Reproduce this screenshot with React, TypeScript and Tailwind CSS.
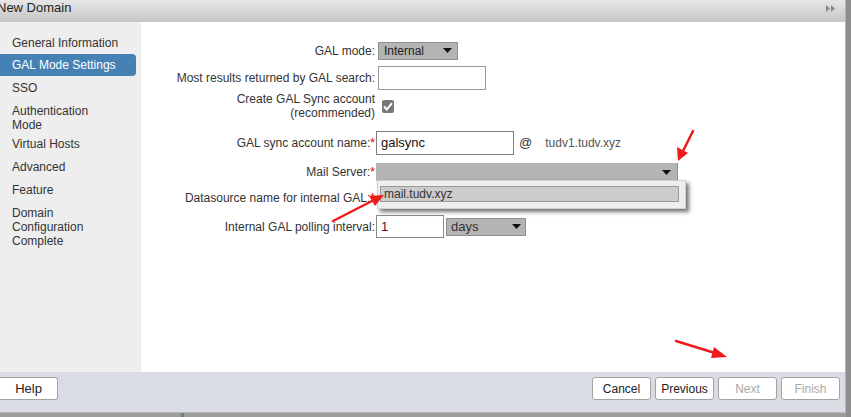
import React from "react";

const navItems: { label: string[]; active?: boolean }[] = [
  { label: ["General Information"] },
  { label: ["GAL Mode Settings"], active: true },
  { label: ["SSO"] },
  { label: ["Authentication", "Mode"] },
  { label: ["Virtual Hosts"] },
  { label: ["Advanced"] },
  { label: ["Feature"] },
  { label: ["Domain", "Configuration", "Complete"] },
];

const Caret = () => (
  <svg width="9" height="5" viewBox="0 0 9 5" className="shrink-0">
    <path d="M0 0 L9 0 L4.5 5 Z" fill="#111" />
  </svg>
);

const Row = ({
  label,
  req,
  className,
  children,
}: {
  label: React.ReactNode;
  req?: boolean;
  className: string;
  children?: React.ReactNode;
}) => {
  return (
    <div className={`flex flex-row items-center ${className}`}>
      <div className="w-[234px] shrink-0 text-right leading-[14px] text-[#333]">
        {label}
        {req && <span className="text-[#d00]">*</span>}
      </div>
      <div className="flex flex-row items-center">{children}</div>
    </div>
  );
};

const Btn = ({ text, off }: { text: string; off?: boolean }) => (
  <div
    className={`w-[59px] h-[23px] flex items-center justify-center rounded-[3px] border border-[#a3a3a3] bg-white text-[12px] ${
      off ? "text-[#a8a8a8]" : "text-[#222]"
    }`}
  >
    {text}
  </div>
);

export default function App() {
  return (
    <div className="relative w-[851px] h-[417px] overflow-hidden bg-[#8e8e8e] text-[12px] font-['Liberation_Sans',Arial,sans-serif]">
      <div className="flex flex-col w-[846px] h-[412px] bg-white border-r border-[#b5b5b5]">
        {/* header */}
        <div className="h-[22px] shrink-0 flex flex-row items-start justify-between bg-gradient-to-b from-[#e6e6e6] to-[#c6c6c6]">
          <span className="ml-[-3px] mt-[0px] text-[13px] leading-[16px] text-[#222]">
            New Domain
          </span>
          <svg width="9" height="7" viewBox="0 0 9 7" className="mt-[5px] mr-[10px]">
            <path d="M0 0 L4 3.5 L0 7 Z M5 0 L9 3.5 L5 7 Z" fill="#8a8a8a" />
          </svg>
        </div>

        {/* body */}
        <div className="flex flex-row flex-1">
          <div className="w-[141px] shrink-0 bg-[#eeeeee] pt-[9px]">
            {navItems.map((it) => {
              const multi = it.label.length > 1;
              const box = multi
                ? "pt-[5px]"
                : it.active
                  ? "h-[22px] flex items-center"
                  : "h-[23px] flex items-center";
              return (
                <div
                  key={it.label[0]}
                  className={`w-[136px] pl-[12px] leading-[14px] ${box} ${
                    it.active ? "bg-[#4681b5] text-white rounded-r-[4px]" : "text-[#333]"
                  }`}
                >
                  {it.label.map((l) => (
                    <div key={l}>{l}</div>
                  ))}
                </div>
              );
            })}
          </div>

          <div className="relative flex-1 flex flex-col pt-[19px]">
            <Row label="GAL mode:" className="h-[19px]">
              <div className="ml-[3px] w-[80px] h-[18px] flex items-center justify-between px-[5px] bg-[#b4b4b4] border border-[#8f8f8f] text-[#222]">
                Internal
                <Caret />
              </div>
            </Row>
            <Row label="Most results returned by GAL search:" className="mt-[6px] h-[24px]">
              <div className="ml-[3px] w-[108px] h-[24px] bg-white border border-[#9a9a9a]" />
            </Row>
            <Row
              label={
                <>
                  Create GAL Sync account
                  <br />
                  (recommended)
                </>
              }
              className="mt-[2px] h-[28px]"
            >
              <div className="ml-[7px] w-[12px] h-[13px] rounded-[2px] bg-[#797979] flex items-center justify-center">
                <svg width="10" height="9" viewBox="0 0 10 9">
                  <path d="M1 4.5 L3.8 7.5 L9 1.2" fill="none" stroke="#fff" strokeWidth="2" />
                </svg>
              </div>
            </Row>
            <Row label="GAL sync account name:" req className="mt-[11px] h-[24px]">
              <div className="ml-[1px] w-[138px] h-[24px] flex items-center pl-[4px] bg-white border border-[#7d7d7d] text-[#111] text-[13px]">
                galsync
              </div>
              <span className="ml-[5px] text-[#333] text-[13px]">@</span>
              <span className="ml-[13px] text-[#555]">tudv1.tudv.xyz</span>
            </Row>
            <Row label="Mail Server:" req className="mt-[8px] h-[18px]">
              <div className="ml-[1px] w-[302px] h-[18px] flex items-center justify-end pr-[6px] bg-[#b4b4b4] border-r border-[#8f8f8f]">
                <Caret />
              </div>
            </Row>
            <Row label="Datasource name for internal GAL:" req className="mt-[8px] h-[18px]" />
            <Row label="Internal GAL polling interval:" className="mt-[8px] h-[23px]">
              <div className="ml-[1px] w-[68px] h-[23px] flex items-center pl-[4px] bg-white border border-[#8a8a8a] text-[#4a1428] text-[13px]">
                1
              </div>
              <div className="ml-[2px] w-[80px] h-[18px] flex items-center justify-between px-[4px] bg-[#b4b4b4] border border-[#8f8f8f] text-[#333] text-[13px]">
                days
                <Caret />
              </div>
            </Row>

            {/* dropdown popup */}
            <div className="absolute left-[236px] top-[158px] w-[309px] h-[29px] bg-[#eeeeee] border border-[#d0d0d0] shadow-[3px_3px_4px_rgba(0,0,0,0.55)] pt-[5px] pl-[2px]">
              <div className="w-[299px] h-[16px] flex items-center pl-[3px] bg-[#cccccc] border border-[#999] text-[#333]">
                mail.tudv.xyz
              </div>
            </div>
          </div>
        </div>

        {/* footer */}
        <div className="h-[40px] shrink-0 flex flex-row items-start justify-between bg-[#d9dde3] pt-[5px] pr-[5px]">
          <div className="w-[58px] h-[23px] flex items-center justify-center rounded-r-[3px] border border-l-0 border-[#a3a3a3] bg-white text-[13px] text-[#222]">
            Help
          </div>
          <div className="flex flex-row gap-[4px]">
            <Btn text="Cancel" />
            <Btn text="Previous" />
            <Btn text="Next" off />
            <Btn text="Finish" off />
          </div>
        </div>
      </div>

      {/* bottom strip */}
      <div className="h-[5px] w-[846px] bg-[#9c9c9c] border-t border-[#b8b8b8] flex flex-row">
        <div className="ml-[181px] w-[3px] bg-[#6f7c82]" />
      </div>

      {/* red annotation arrows */}
      <svg className="absolute left-0 top-0 pointer-events-none" width="851" height="417">
        <g stroke="#ee1a1a" strokeWidth="2.5" strokeLinecap="round" fill="#ee1a1a">
          <line x1="693" y1="131" x2="683" y2="151" />
          <path d="M678 161 L677 147 L688 153 Z" stroke="none" />
          <line x1="333" y1="221" x2="372" y2="201" />
          <path d="M384 195 L369 196 L375 206 Z" stroke="none" />
          <line x1="676" y1="341" x2="715" y2="353" />
          <path d="M727 357 L714 347 L711 358 Z" stroke="none" />
        </g>
      </svg>
    </div>
  );
}
